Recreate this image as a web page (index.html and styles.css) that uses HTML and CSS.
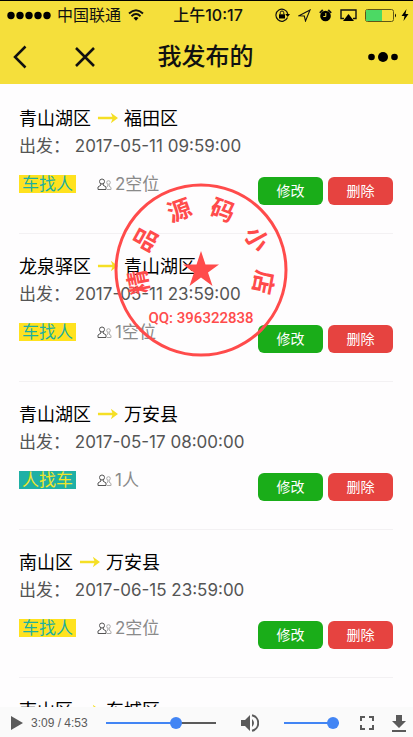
FILE: index.html
```
<!DOCTYPE html>
<html lang="zh-CN">
<head>
    <meta charset="UTF-8">
    <meta name="viewport" content="width=device-width, initial-scale=1.0">
    <title>我发布的</title>
    <link rel="stylesheet" href="styles.css">
</head>
<body>
    <!-- Shared icons -->
    <svg class="icon-defs" aria-hidden="true">
        <symbol id="icon-arrow" viewBox="0 0 22 12">
            <path d="M1 6H18" stroke="#f5df25" stroke-width="2.600" fill="none"/>
            <path d="M14.500 0.500L22 6L14.500 11.500L16.500 6Z" fill="#f5df25"/>
        </symbol>
        <symbol id="icon-people" viewBox="0 0 15 13">
            <g fill="none" stroke="#555">
                <circle cx="5" cy="3.500" r="2.500"/>
                <path d="M3.500 5.500L4 7L1 9V11.500H9V9L6 7L6.500 5.500"/>
            </g>
            <g fill="none" stroke="#aaa">
                <circle cx="11.500" cy="4.500" r="1.800"/>
                <path d="M10.500 6.500L11 8L9.500 9M10 11.500H14V9.500L12 8L12.500 6.500"/>
            </g>
        </symbol>
    </svg>

    <div class="screen">
        <header>
            <div class="status-bar">
                <div class="status-left">
                    <svg width="45" height="9" viewBox="0 0 45 9">
                        <circle cx="4" cy="4.500" r="3.700"/><circle cx="13" cy="4.500" r="3.700"/><circle cx="22" cy="4.500" r="3.700"/><circle cx="31" cy="4.500" r="3.700"/><circle cx="40" cy="4.500" r="3.700"/>
                    </svg>
                    <span class="carrier">中国联通</span>
                    <svg class="wifi" width="16" height="12" viewBox="0 0 16 12">
                        <path d="M1 4.500Q8 -2 15 4.500M3.500 7.200Q8 3 12.500 7.200" fill="none" stroke="#111" stroke-width="1.900"/>
                        <path d="M5.500 9Q8 7 10.500 9L8 11.700Z"/>
                    </svg>
                </div>
                <div class="clock">上午10:17</div>
                <div class="status-right">
                    <svg width="15" height="14" viewBox="0 0 15 14">
                        <path d="M12.500 9.500A6 6 0 1 1 12.800 6" fill="none" stroke="#111" stroke-width="1.200"/>
                        <path d="M10.300 6H15L12.700 9Z"/>
                        <rect x="4" y="6.300" width="6" height="4.200"/>
                        <path d="M5.200 6.500V4.800A1.800 1.800 0 0 1 8.800 4.800V6.500" fill="none" stroke="#111"/>
                    </svg>
                    <svg width="13" height="13" viewBox="0 0 13 13">
                        <path d="M1 6.800L12 1L7.500 12L6.300 7Z" fill="none" stroke="#111" stroke-width="1.100"/>
                    </svg>
                    <svg width="13" height="13" viewBox="0 0 13 13">
                        <circle cx="6.500" cy="7" r="5.300"/>
                        <path d="M0.800 3.800L3.800 1M9.200 1L12.200 3.800" stroke="#111" stroke-width="1.800"/>
                        <path d="M6.800 4V7.500H4.300" fill="none" stroke="#f5df3b"/>
                    </svg>
                    <svg width="17" height="13" viewBox="0 0 17 13">
                        <path d="M4 9.500H1V1H16V9.500H13" fill="none" stroke="#111" stroke-width="1.400"/>
                        <path d="M8.500 5L14 12H3Z"/>
                    </svg>
                    <svg class="battery" width="32" height="13" viewBox="0 0 32 13">
                        <rect x="0.500" y="0.500" width="28" height="12" rx="2" fill="none" stroke="#5f5616"/>
                        <rect x="1" y="1" width="16" height="11" fill="#4cd964"/>
                        <path d="M30 4.500Q32 6.500 30 8.500Z"/>
                    </svg>
                    <svg width="8" height="12" viewBox="0 0 8 12">
                        <path d="M5.500 0L0.500 7H3.500L2.500 12L7.500 5H4.500Z"/>
                    </svg>
                </div>
            </div>
            <nav>
                <div class="nav-left">
                    <button class="nav-button" aria-label="返回">
                        <svg width="14" height="24" viewBox="0 0 14 24"><path d="M12.500 1.500L2 12L12.500 22.500" fill="none" stroke="#111" stroke-width="2.500"/></svg>
                    </button>
                    <button class="nav-button" aria-label="关闭">
                        <svg width="20" height="20" viewBox="0 0 20 20"><path d="M1 1L19 19M19 1L1 19" fill="none" stroke="#111" stroke-width="2.500"/></svg>
                    </button>
                </div>
                <h1>我发布的</h1>
                <button class="nav-button nav-more" aria-label="更多">
                    <svg width="30" height="12" viewBox="0 0 30 12"><circle cx="3.500" cy="6" r="3.300"/><circle cx="15" cy="6" r="5"/><circle cx="26.500" cy="6" r="3.300"/></svg>
                </button>
            </nav>
        </header>

        <main class="trip-list">
            <div class="trip">
                <h2>青山湖区 <svg class="arrow"><use href="#icon-arrow"/></svg> 福田区</h2>
                <p class="depart">出发： 2017-05-11 09:59:00</p>
                <div class="trip-footer">
                    <span class="tag">车找人</span>
                    <span class="seats"><svg class="people"><use href="#icon-people"/></svg>2空位</span>
                    <div class="actions">
                        <button class="edit">修改</button>
                        <button class="delete">删除</button>
                    </div>
                </div>
            </div>

            <div class="trip">
                <h2>龙泉驿区 <svg class="arrow"><use href="#icon-arrow"/></svg> 青山湖区</h2>
                <p class="depart">出发： 2017-05-11 23:59:00</p>
                <div class="trip-footer">
                    <span class="tag">车找人</span>
                    <span class="seats"><svg class="people"><use href="#icon-people"/></svg>1空位</span>
                    <div class="actions">
                        <button class="edit">修改</button>
                        <button class="delete">删除</button>
                    </div>
                </div>
            </div>

            <div class="trip">
                <h2>青山湖区 <svg class="arrow"><use href="#icon-arrow"/></svg> 万安县</h2>
                <p class="depart">出发： 2017-05-17 08:00:00</p>
                <div class="trip-footer">
                    <span class="tag tag-passenger">人找车</span>
                    <span class="seats"><svg class="people"><use href="#icon-people"/></svg>1人</span>
                    <div class="actions">
                        <button class="edit">修改</button>
                        <button class="delete">删除</button>
                    </div>
                </div>
            </div>

            <div class="trip">
                <h2>南山区 <svg class="arrow"><use href="#icon-arrow"/></svg> 万安县</h2>
                <p class="depart">出发： 2017-06-15 23:59:00</p>
                <div class="trip-footer">
                    <span class="tag">车找人</span>
                    <span class="seats"><svg class="people"><use href="#icon-people"/></svg>2空位</span>
                    <div class="actions">
                        <button class="edit">修改</button>
                        <button class="delete">删除</button>
                    </div>
                </div>
            </div>

            <div class="trip">
                <h2>南山区 <svg class="arrow"><use href="#icon-arrow"/></svg> 东城区</h2>
            </div>
        </main>

        <!-- Shop stamp over the video -->
        <svg class="stamp" width="176" height="176" viewBox="-88 -88 176 176">
            <circle r="85" fill="none" stroke="#ff4b4b" stroke-width="3"/>
            <path d="M0 -19L4.500 -5.500H18L7 2.500L11.500 16L0 7.500L-11.500 16L-7 2.500L-18 -5.500H-4.500Z"/>
            <g class="stamp-name">
                <text transform="rotate(-101) translate(0 -55)">精</text>
                <text transform="rotate(-61) translate(0 -55)">品</text>
                <text transform="rotate(-20) translate(0 -55)">源</text>
                <text transform="rotate(20) translate(0 -55)">码</text>
                <text transform="rotate(61) translate(0 -55)">小</text>
                <text transform="rotate(101) translate(0 -55)">店</text>
            </g>
            <text class="stamp-qq" y="53">QQ: 396322838</text>
        </svg>
    </div>

    <!-- Player controls -->
    <div class="controls">
        <button class="control" aria-label="播放">
            <svg width="12" height="14" viewBox="0 0 12 14"><path d="M0 0L12 7L0 14Z"/></svg>
        </button>
        <span class="time">3:09 / 4:53</span>
        <input class="seek" type="range" min="0" max="293" value="193" aria-label="播放进度">
        <button class="control" aria-label="音量">
            <svg width="18" height="18" viewBox="0 0 18 18">
                <path d="M0 6V12H4L9 17V1L4 6Z"/>
                <path d="M11 5Q15 9 11 13Z"/>
                <path d="M11 1.200A8 8 0 0 1 11 16.800" fill="none" stroke="#5a5a5a" stroke-width="2"/>
            </svg>
        </button>
        <input class="volume" type="range" min="0" max="100" value="100" aria-label="音量大小">
        <button class="control fullscreen" aria-label="全屏">
            <svg width="14" height="14" viewBox="0 0 14 14"><path d="M1 5V1H5M9 1H13V5M13 9V13H9M5 13H1V9" fill="none" stroke="#5a5a5a" stroke-width="2"/></svg>
        </button>
        <button class="control" aria-label="下载">
            <svg width="14" height="17" viewBox="0 0 14 17"><path d="M4 0H10V6H14L7 13L0 6H4ZM0 15H14V17H0Z"/></svg>
        </button>
    </div>
</body>
</html>
```
FILE: styles.css
```
* {
    box-sizing: border-box;
}
body {
    margin: 0;
    height: 100vh;
    display: flex;
    flex-direction: column;
    font-family: Inter, "Noto Sans CJK SC", sans-serif;
    background-color: #fefdfe;
    color: #111;
}
button {
    font-family: inherit;
    border: none;
    padding: 0;
    cursor: pointer;
}
svg {
    display: block;
    flex-shrink: 0;
}
.icon-defs {
    position: absolute;
    width: 0;
    height: 0;
}
.screen {
    position: relative;
    flex: 1;
    min-height: 0;
    overflow: hidden;
}
header {
    background-color: #f5df3b;
    border-top: 1px solid #000;
}
.status-bar {
    display: grid;
    grid-template-columns: 1fr auto 1fr;
    align-items: center;
    height: 28px;
    padding: 0 4px 0 7px;
    font-size: 16px;
    line-height: 24px;
}
.status-left {
    display: flex;
    align-items: center;
    gap: 5px;
}
.wifi {
    margin-left: 2px;
}
.clock {
    font-weight: 500;
}
.status-right {
    display: flex;
    align-items: center;
    justify-content: flex-end;
    gap: 8px;
}
.battery {
    margin-right: -4px;
}
nav {
    display: grid;
    grid-template-columns: 1fr auto 1fr;
    align-items: center;
    height: 55px;
    padding: 0 15px 0 13px;
}
.nav-left {
    display: flex;
    align-items: center;
    gap: 48px;
}
.nav-button {
    background: none;
}
.nav-more {
    justify-self: end;
}
h1 {
    margin: 0;
    font-size: 24px;
    font-weight: 500;
    line-height: 32px;
}
.trip-list {
    padding: 2px 20px 0 19px;
}
.trip {
    height: 148px;
    padding-top: 20px;
    border-bottom: 1px solid #f3f1f3;
}
h2 {
    display: flex;
    align-items: center;
    gap: 6px;
    margin: 0;
    font-size: 18px;
    font-weight: 400;
    line-height: 26px;
    color: #000;
}
.arrow {
    width: 21px;
    height: 12px;
    margin-bottom: 3px;
}
.depart {
    margin: 0;
    font-size: 17px;
    line-height: 28px;
    color: #555;
}
.trip-footer {
    display: flex;
    align-items: flex-start;
    margin-top: 15px;
}
.tag {
    width: 57px;
    padding-left: 3px;
    font-size: 17px;
    line-height: 18px;
    background-color: #ffe21f;
    color: #1faf9f;
}
.tag-passenger {
    background-color: #1fb0a5;
    color: #f0e52b;
}
.seats {
    display: flex;
    align-items: center;
    gap: 3px;
    margin-left: 21px;
    font-size: 17px;
    line-height: 18px;
    color: #8a8a8a;
}
.people {
    width: 15px;
    height: 13px;
}
.actions {
    display: flex;
    gap: 5px;
    margin-left: auto;
    padding-top: 2px;
}
.actions button {
    width: 65px;
    height: 28px;
    padding-bottom: 2px;
    border-radius: 6px;
    font-size: 14px;
    color: #fff;
}
.actions .edit {
    background-color: #1aad19;
}
.actions .delete {
    background-color: #e64340;
}
.stamp {
    position: absolute;
    top: 182px;
    left: 113px;
    fill: #ff4b4b;
    pointer-events: none;
}
.stamp text {
    text-anchor: middle;
}
.stamp-name {
    font-size: 24px;
    font-weight: 700;
}
.stamp-qq {
    font-family: Roboto, sans-serif;
    font-size: 15px;
    font-weight: 500;
}
.controls {
    display: flex;
    align-items: center;
    height: 30px;
    padding: 2px 7px 0 11px;
    background-color: #fafafa;
}
.control {
    background: none;
    fill: #5a5a5a;
}
.time {
    margin: 0 18px 0 8px;
    font-family: "Liberation Sans", sans-serif;
    font-size: 12px;
    color: #5a5a5a;
}
input[type="range"] {
    appearance: none;
    height: 12px;
    margin: 0;
    background: linear-gradient(#4285f4, #4285f4) center / 100% 2px no-repeat;
}
input[type="range"]::-webkit-slider-thumb {
    appearance: none;
    width: 12px;
    height: 12px;
    border-radius: 50%;
    background-color: #4285f4;
}
input.seek {
    flex: 1;
    min-width: 0;
    margin-right: 25px;
    background-image: linear-gradient(to right, #4285f4 64%, #5a5a5a 64%);
}
input.volume {
    width: 55px;
    margin-left: 25px;
}
.fullscreen {
    margin: 0 18px 0 21px;
}
```
